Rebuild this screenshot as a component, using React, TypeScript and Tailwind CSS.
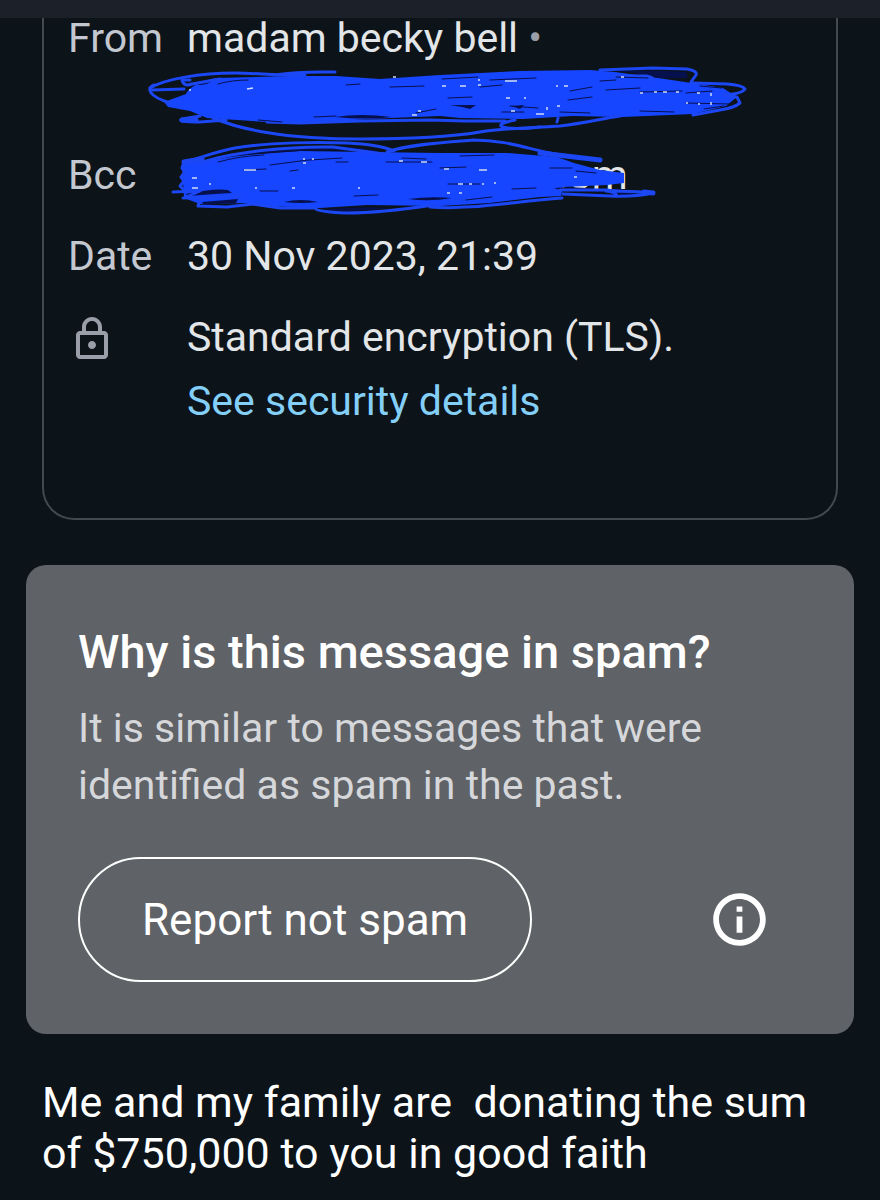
import React from 'react';

interface DetailRowProps {
  label: React.ReactNode;
  children: React.ReactNode;
}

const DetailRow: React.FC<DetailRowProps> = ({ label, children }) => (
  <div className="grid grid-cols-[119px_1fr]">
    <dt className="text-[#c3c8d0]">{label}</dt>
    <dd className="relative text-[#e3e6e8]">{children}</dd>
  </div>
);

const LockIcon = () => (
  <svg viewBox="0 0 24 24" className="mt-1.5 size-12 fill-[#9a9ea8]" role="img" aria-label="Security">
    <path d="M18 8h-1V6c0-2.76-2.24-5-5-5S7 3.24 7 6v2H6c-1.1 0-2 .9-2 2v10c0 1.1.9 2 2 2h12c1.1 0 2-.9 2-2V10c0-1.1-.9-2-2-2zM9 6c0-1.66 1.34-3 3-3s3 1.34 3 3v2H9V6zm9 14H6V10h12v10zm-6-3c1.1 0 2-.9 2-2s-.9-2-2-2-2 .9-2 2 .9 2 2 2z" />
  </svg>
);

const InfoIcon = () => (
  <svg viewBox="0 0 24 24" className="size-[63px] fill-white" aria-hidden="true">
    <path d="M10.9 7h2.2v2h-2.2zm0 3.9h2.2v6.1h-2.2zM12 2C6.48 2 2 6.48 2 12s4.48 10 10 10 10-4.48 10-10S17.52 2 12 2zm0 17.8c-4.3 0-7.8-3.5-7.8-7.8s3.5-7.8 7.8-7.8 7.8 3.5 7.8 7.8-3.5 7.8-7.8 7.8z" />
  </svg>
);

// Gaps left between the pen strokes
const gaps = [
  'M78 24 Q92 20 108 20', 'M118 60 L142 62', 'M174 57 L196 56', 'M302 19 L338 17',
  'M350 20 L396 18', 'M276 53 L296 49', 'M206 25 L220 24', 'M250 27 L284 26', 'M308 38 L332 37',
  'M370 46 L398 48', 'M362 52 L384 52', 'M430 31 L452 27', 'M466 30 L500 28', 'M476 17 L508 18',
  'M420 52 L450 53', 'M500 32 L542 31', 'M546 33 L572 31', 'M546 43 L590 44', 'M560 26 L582 28',
  'M564 49 L584 46', 'M428 40 L452 37', 'M500 51 L534 52', 'M460 21 L476 20', 'M340 27 L362 25',
  'M78 102 Q100 96 124 95', 'M130 105 Q166 99 202 98', 'M104 110 L126 109', 'M150 111 L158 110',
  'M196 102 L208 102', 'M246 102 L292 102', 'M300 108 L326 107', 'M320 96 L354 95',
  'M308 124 L340 124', 'M214 136 L238 135', 'M326 140 L352 137', 'M410 108 L432 108',
  'M436 111 L456 113', 'M372 129 L396 128', 'M120 131 L138 131', 'M262 98 L286 99',
];

// Wider openings where the strokes fan out
const openings = [
  'M195 57 Q220 53 252 57 Q226 60 195 57',
  'M478 11 Q516 10 546 12 L548 18 L518 18 Q506 14 478 11',
  'M310 45 L336 45 L330 49 L322 47 Z',
  'M371 46 L384 45 L380 49 Z',
  'M56 23 Q64 20 74 20 Q68 25 58 25 Z',
  'M60 102 Q110 88 180 86 Q220 86 240 92 Q200 89 160 91 Q110 93 60 102',
  'M46 134 Q74 128 88 130 L92 133 Q74 134 48 136 Z',
  'M62 142 L98 139 L96 143 L64 145 Z',
  'M144 142 Q160 138 178 142 Q160 144 144 142',
  'M180 150 Q220 146 250 148 Q214 153 180 150',
  'M268 139 Q290 136 312 138 Q290 142 268 139',
  'M316 147 Q350 142 396 140 Q360 146 316 147',
  'M414 128 Q440 126 462 130 L466 133 Q440 130 420 130 Z',
  'M478 132 Q490 130 500 132 Q490 135 480 135 Z',
];

// Bits of the address still showing through
const specks = [
  'M49 30h2', 'M107 29l6 -1', 'M253 17h3', 'M272 55h5', 'M278 51h3', 'M302 26h4', 'M320 26h6',
  'M338 20h2', 'M338 25h3', 'M365 21h12', 'M366 38h4', 'M384 38h2', 'M371 51h4', 'M396 54h8',
  'M407 47v3', 'M417 46h3', 'M416 26h2', 'M424 26h4', 'M481 17h3', 'M500 33h3', 'M514 32h3',
  'M523 32h4', 'M536 32h3', 'M557 33h3', 'M571 33v3', 'M546 43h2', 'M558 44h2', 'M571 42v3',
  'M104 110h12', 'M52 118h5', 'M52 128h6', 'M69 124h2', 'M163 99h2', 'M172 99h2', 'M163 103h3',
  'M259 101h4', 'M281 102h6', 'M115 128h2', 'M152 128h3', 'M218 128h2', 'M318 124h5', 'M329 124h3',
  'M342 124h2', 'M354 123h2', 'M307 133h3', 'M319 133h3', 'M339 110h8', 'M304 109h5', 'M434 117h3',
];

const Redaction = () => (
  <svg
    viewBox="0 0 620 160"
    className="pointer-events-none absolute top-[50px] -left-[47px] h-[160px] w-[620px]"
    fill="none"
    strokeLinecap="round"
    strokeLinejoin="round"
    aria-hidden="true"
  >
    <g fill="#1646ff">
      <path d="M28 47 L24 42 L46 34 Q50 24 76 18 L150 16 L196 16 L240 19 L300 15 L380 11 L450 10 L475 12 L518 18 L552 23 L583 28 L597 37 L586 46 L553 54 L483 57 L433 56 L383 59 L320 58 L300 56 L227 59 L200 61 L160 63 L127 62 L67 58 L50 51 Z" />
      <path d="M42 104 L93 96 L160 91 L300 93 L367 93 L417 97 L434 103 L460 110 L484 113 L484 123 L467 125 L423 127 L421 136 L400 137 L350 143 L300 146 L227 145 L180 148 L127 146 L105 143 L60 144 L44 138 L43 122 Z" />
    </g>

    <g fill="#06104d">
      {openings.map(d => <path key={d} d={d} />)}
    </g>

    <g stroke="#1c47f4" strokeWidth="3">
      <path d="M10 28 C25 19 60 13 95 13 C120 13 135 16 165 15 M135 15 C160 11 180 12 195 12" />
      <path d="M30 43 C8 36 6 28 14 25 M12 30 L44 29 M50 20 L42 20 Q44 27 52 24 L80 19" />
      <path d="M460 10 L513 8 L547 9 Q558 11 556 15 L551 22" />
      <path d="M476 16 L506 16 Q514 17 512 20" />
      <path d="M553 23 L587 24 Q602 25 605 29 Q602 34 583 35 L597 37 L600 43 Q594 48 580 50 L553 55" />
      <path d="M60 56 L42 59 Q36 62 60 62 L86 60 M73 58 C90 65 110 70 130 73 C150 77 190 79 220 79 C260 79 310 77 340 72 C365 68 390 68 420 66 C445 63 460 59 480 56" />
      <path d="M127 62 L160 63 L220 61 L290 60 L325 61 L365 61 M418 58 L417 62 M375 60 Q355 64 363 67 Q372 70 400 67" />
      <path d="M44 102 C60 98 78 91 95 88 C130 82 180 82 207 83 C230 84 245 87 254 91" />
      <path d="M60 103 C90 92 150 86 193 87 L244 94 M247 92 C270 84 310 82 333 80 C365 80 385 88 410 93 C425 96 440 97 460 100" />
      <path d="M44 102 L42 108 L45 112 L41 117 L44 121 L40 126 L45 131 M33 132 L54 131 M43 138 L100 136 M44 138 L60 131" />
      <path d="M60 140 L58 146 L87 147 L113 144 L140 148 L176 148 M175 148 Q175 152 207 153 C235 153 260 150 293 145" />
      <path d="M290 147 C330 150 370 142 422 138 M423 134 L470 136 Q495 137 513 133 C500 131 480 132 467 130 L420 130 M466 131 Q476 132 477 136" />
    </g>
    <g stroke="#1c47f4" strokeWidth="5">
      <path d="M400 93 L460 100" />
      <path d="M504 132 L513 133" />
      <path d="M44 102 L62 99" />
      <path d="M42 60 L56 60" />
    </g>

    <g stroke="#06104d">
      {gaps.map(d => <path key={d} d={d} />)}
    </g>
    <g stroke="#cfdcf5" strokeWidth="1.5" strokeLinecap="butt">
      {specks.map(d => <path key={d} d={d} />)}
    </g>
  </svg>
);

const MessageDetails = () => (
  <section className="mx-[42px] -mt-2 rounded-b-[32px] border-2 border-t-0 border-[#434950] pb-[89px] pl-6">
    <dl className="flex flex-col gap-[25px] text-[41px] leading-[56px]">
      <DetailRow label="From">
        <div>
          madam becky bell <span className="text-[#9a9ea8]">•</span>
        </div>
        <div className="h-14" />
        <div className="absolute inset-0 z-10">
          <Redaction />
        </div>
      </DetailRow>
      <DetailRow label="Bcc">
        <span className="ml-[360px]">com</span>
      </DetailRow>
      <DetailRow label="Date">30 Nov 2023, 21:39</DetailRow>
      <DetailRow label={<LockIcon />}>
        <p>Standard encryption (TLS).</p>
        <a href="#security" className="mt-2 block text-[#84cff8]">See security details</a>
      </DetailRow>
    </dl>
  </section>
);

const SpamNotice = () => (
  <section className="mx-[26px] mt-[45px] rounded-[20px] bg-[#5f6266] px-[52px] pt-[55px] pb-[52px]">
    <h2 className="text-[47px] leading-[64px] font-medium text-white">Why is this message in spam?</h2>
    <p className="mt-4 text-[41px] leading-[57px] text-[#d5d7da]">
      It is similar to messages that were identified as spam in the past.
    </p>
    <div className="mt-[43px] flex items-center justify-between pr-[31px]">
      <button type="button" className="h-[125px] rounded-full border-2 border-white px-[62px] text-[44px] text-white">
        Report not spam
      </button>
      <button type="button" aria-label="More information">
        <InfoIcon />
      </button>
    </div>
  </section>
);

export default function App() {
  return (
    <div className="min-h-screen bg-[#0c1319] font-['Roboto',sans-serif]">
      <header className="relative z-10 h-[18px] bg-[#1c2129]" />
      <main>
        <MessageDetails />
        <SpamNotice />
        <p className="mx-[42px] mt-[43px] text-[43px] leading-[51px] whitespace-pre-wrap text-white">
          {'Me and my family are  donating the sum of $750,000 to you in good faith'}
        </p>
      </main>
    </div>
  );
}
